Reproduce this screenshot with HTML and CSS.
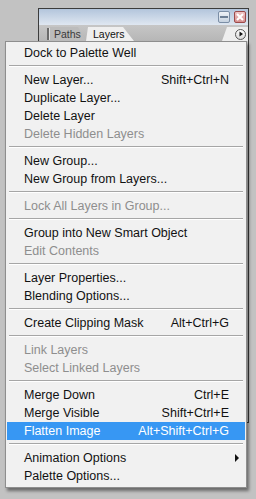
FILE: index.html
```html
<!DOCTYPE html>
<html lang="en">
<head>
    <meta charset="UTF-8">
    <title>Layers palette menu</title>
    <link rel="stylesheet" href="styles.css">
</head>
<body>
    <div class="palette">
        <div class="title-bar">
            <span class="win-btn min-btn"><span class="min-bar"></span></span>
            <span class="win-btn close-btn">
                <svg width="8" height="8" viewBox="0 0 8 8"><path d="M1 1L7 7M7 1L1 7" stroke="#fff" stroke-width="2"/></svg>
            </span>
        </div>
        <div class="tab-bar">
            <span class="grip"></span>
            <span class="tab tab-back">Paths</span>
            <span class="tab tab-active">Layers</span>
            <span class="tab-fill"></span>
            <span class="menu-corner">
                <span class="menu-btn">
                    <svg width="6" height="6" viewBox="0 0 6 6"><path d="M1.5 0.5L5 3L1.5 5.5Z" fill="#111"/></svg>
                </span>
            </span>
        </div>
    </div>

    <ul class="menu">
        <li class="item">Dock to Palette Well</li>
        <li class="sep"></li>
        <li class="item">New Layer...<span class="key">Shift+Ctrl+N</span></li>
        <li class="item">Duplicate Layer...</li>
        <li class="item">Delete Layer</li>
        <li class="item off">Delete Hidden Layers</li>
        <li class="sep"></li>
        <li class="item">New Group...</li>
        <li class="item">New Group from Layers...</li>
        <li class="sep"></li>
        <li class="item off">Lock All Layers in Group...</li>
        <li class="sep"></li>
        <li class="item">Group into New Smart Object</li>
        <li class="item off">Edit Contents</li>
        <li class="sep"></li>
        <li class="item">Layer Properties...</li>
        <li class="item">Blending Options...</li>
        <li class="sep"></li>
        <li class="item">Create Clipping Mask<span class="key">Alt+Ctrl+G</span></li>
        <li class="sep"></li>
        <li class="item off">Link Layers</li>
        <li class="item off">Select Linked Layers</li>
        <li class="sep"></li>
        <li class="item">Merge Down<span class="key">Ctrl+E</span></li>
        <li class="item">Merge Visible<span class="key">Shift+Ctrl+E</span></li>
        <li class="item active">Flatten Image<span class="key">Alt+Shift+Ctrl+G</span></li>
        <li class="sep"></li>
        <li class="item">Animation Options<span class="arrow"></span></li>
        <li class="item">Palette Options...</li>
    </ul>
</body>
</html>
```

FILE: styles.css
```css
* {
    margin: 0;
    padding: 0;
    box-sizing: border-box;
}

body {
    background-color: #c2c2c2;
    font-family: 'Liberation Sans', Arial, sans-serif;
    font-size: 12.5px;
    color: #111;
    width: 256px;
    height: 499px;
    overflow: hidden;
}

/* palette window behind the menu */
.palette {
    position: absolute;
    left: 38px;
    top: 8px;
    width: 211px;
    height: 415px;
    border: 1px solid #3c3c3c;
    background-color: #d4d4d4;
}

.title-bar {
    height: 16px;
    background: linear-gradient(#b3c5dc, #dfe7f1);
    display: flex;
    justify-content: flex-end;
    align-items: center;
    gap: 4px;
    padding-right: 2px;
}

.win-btn {
    width: 12px;
    height: 12px;
    border-radius: 2px;
    display: flex;
    align-items: center;
    justify-content: center;
}

.min-btn {
    background: linear-gradient(#eef2f7, #c6d2e0);
    border: 1px solid #7b8ea6;
}

.min-bar {
    width: 8px;
    height: 2px;
    background-color: #6d7f96;
}

.close-btn {
    background: linear-gradient(#f0c4c4, #d68e8e);
    border: 1px solid #9c4a4a;
}

.tab-bar {
    height: 16px;
    background: linear-gradient(#c6c6c6, #b6b6b6);
    display: flex;
    align-items: flex-end;
    padding-left: 8px;
}

.grip {
    height: 12px;
    margin-bottom: 1px;
    background-color: #6a6a6a;
    border-right: 1px solid #e0e0e0;
    width: 3px;
}

.tab {
    height: 14px;
    display: flex;
    align-items: center;
    font-size: 10.5px;
}

.tab-back {
    width: 36px;
    padding-left: 4px;
    color: #3a3a3a;
    background-color: #bcbcbc;
    clip-path: polygon(0 0, 28px 0, 100% 100%, 0 100%);
}

.tab-active {
    width: 48px;
    padding-left: 7px;
    color: #111;
    background-color: #efefef;
    clip-path: polygon(2px 0, 37px 0, 100% 100%, 0 100%);
}

.tab-fill {
    flex: 1;
}

.menu-corner {
    width: 26px;
    height: 14px;
    background-color: #eeeeee;
    clip-path: polygon(5px 0, 100% 0, 100% 100%, 0 100%);
    display: flex;
    align-items: center;
    justify-content: flex-end;
    padding-right: 2px;
}

.menu-btn {
    width: 11px;
    height: 11px;
    border-radius: 50%;
    border: 1px solid #555;
    background: linear-gradient(#ffffff, #d8d8d8);
    display: flex;
    align-items: center;
    justify-content: center;
}

/* flyout menu */
.menu {
    position: absolute;
    left: 5px;
    top: 41px;
    width: 242px;
    list-style: none;
    background-color: #f1f1f1;
    border: 1px solid #8e8e8e;
    padding: 2px 1px;
    box-shadow: 2px 3px 3px rgba(0, 0, 0, 0.45);
}

.item {
    height: 18px;
    line-height: 18px;
    padding: 0 16px 0 17px;
    display: flex;
    justify-content: space-between;
    align-items: center;
    white-space: nowrap;
}

.item.off {
    color: #8e8e8e;
}

.item.active {
    background-color: #3797f3;
    color: #fff;
}

.arrow {
    width: 0;
    height: 0;
    border-top: 4px solid transparent;
    border-bottom: 4px solid transparent;
    border-left: 4px solid #111;
    margin-right: -10px;
}

.sep {
    height: 9px;
    padding: 3px 2px 0;
}

.sep::before {
    content: '';
    display: block;
    border-top: 1px solid #a6a6a6;
    border-bottom: 1px solid #ffffff;
}
```
